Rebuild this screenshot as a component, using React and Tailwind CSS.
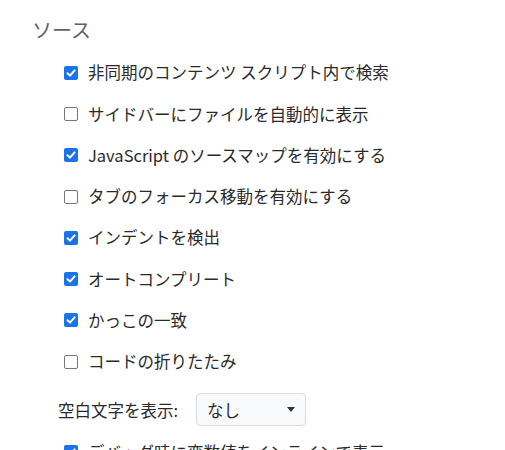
import { useState } from 'react'

const ITEMS = [
    { label: '非同期のコンテンツ スクリプト内で検索', checked: true },
    { label: 'サイドバーにファイルを自動的に表示', checked: false },
    { label: 'JavaScript のソースマップを有効にする', checked: true },
    { label: 'タブのフォーカス移動を有効にする', checked: false },
    { label: 'インデントを検出', checked: true },
    { label: 'オートコンプリート', checked: true },
    { label: 'かっこの一致', checked: true },
    { label: 'コードの折りたたみ', checked: false },
]

function Check({ checked, onClick }) {
    return checked ? (
        <span onClick={onClick} className="flex h-[14px] w-[14px] shrink-0 items-center justify-center rounded-[2px] bg-[#1a73e8]">
            <svg width="10" height="10" viewBox="0 0 10 10">
                <path d="M1.5 5.2 L4 7.6 L8.6 2.4" fill="none" stroke="#fff" strokeWidth="2" strokeLinecap="round" strokeLinejoin="round" />
            </svg>
        </span>
    ) : (
        <span onClick={onClick} className="h-[14px] w-[14px] shrink-0 rounded-[2px] border border-[#767676] bg-white" />
    )
}

export default function App() {
    const [items, setItems] = useState(ITEMS)
    const toggle = i => setItems(items.map((it, j) => (j === i ? { ...it, checked: !it.checked } : it)))

    return (
        <div className="h-[450px] w-[505px] overflow-hidden bg-white pl-[32px] pt-[15px] text-[#2a2a2a]" style={{ fontFamily: '"Noto Sans CJK JP", "Noto Sans", sans-serif' }}>
            <h2 className="text-[20px] leading-[30px] font-normal text-[#5f6368]">ソース</h2>

            <div className="mt-[7px] flex flex-col">
                {items.map((it, i) => (
                    <label key={i} className="flex h-[41.3px] items-center gap-[10px] pl-[32px] text-[16.5px]">
                        <Check checked={it.checked} onClick={() => toggle(i)} />
                        <span>{it.label}</span>
                    </label>
                ))}
            </div>

            {/* whitespace select */}
            <div className="mt-[11px] flex items-center gap-[18px] pl-[26px] text-[16.5px]">
                <span>空白文字を表示:</span>
                <div className="flex h-[33px] w-[110px] items-center justify-between rounded-[4px] border border-[#dadce0] bg-[#f8f9fa] pl-[10px] pr-[10px]">
                    <span>なし</span>
                    <svg width="8" height="5" viewBox="0 0 8 5"><path d="M0 0 H8 L4 5 Z" fill="#333" /></svg>
                </div>
            </div>

            <label className="mt-[5px] flex h-[41px] items-center gap-[10px] pl-[32px] text-[16.5px]">
                <Check checked />
                <span>デバッグ時に変数値をインラインで表示</span>
            </label>
        </div>
    )
}
